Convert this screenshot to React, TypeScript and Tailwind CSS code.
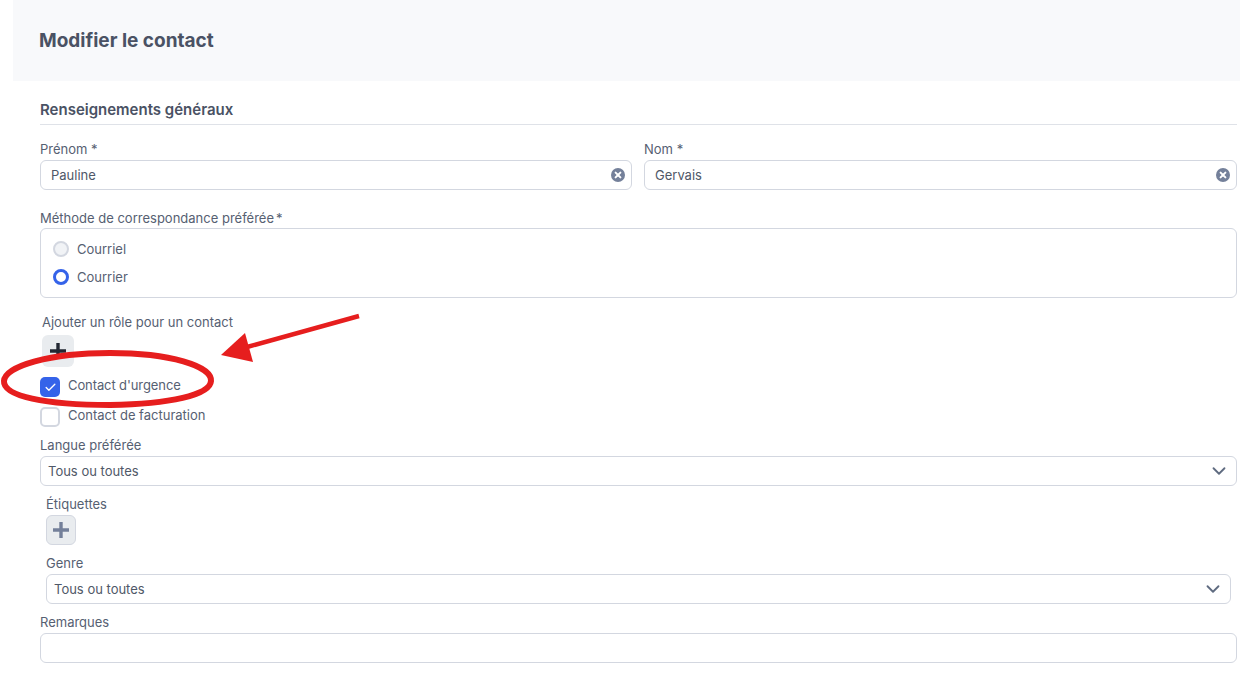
import { ChevronDown, Check } from "lucide-react";

const label = "text-[13px] leading-5 text-[#566072]";
const field = "h-[30px] rounded-md border border-[#d3d7e0] bg-white flex items-center justify-between text-[13px] text-[#4f5868]";

function Clear() {
  return (
    <svg width="14" height="14" viewBox="0 0 14 14" className="mr-[6px] -mt-px">
      <circle cx="7" cy="7" r="7" fill="#74809a" />
      <path d="M4.6 4.6l4.8 4.8M9.4 4.6l-4.8 4.8" stroke="#fff" strokeWidth="2" strokeLinecap="round" />
    </svg>
  );
}

function Plus({ color }: { color: string }) {
  return (
    <svg width="18" height="18" viewBox="0 0 18 18">
      <path d="M9 1v16M1 9h16" stroke={color} strokeWidth="3.4" />
    </svg>
  );
}

function SelectBox({ className }: { className: string }) {
  return (
    <div className={`${field} pl-[7px] pr-[6px] ${className}`}>
      <span className="pt-px">Tous ou toutes</span>
      <ChevronDown size={22} strokeWidth={2} color="#5f6b80" />
    </div>
  );
}

export default function App() {
  return (
    <div className="relative h-[682px] w-[1240px] overflow-hidden bg-white font-['Inter',sans-serif]">
      <div className="ml-[13px] flex h-[81px] items-center bg-[#f8f9fb] pl-[26px] pt-[2px]">
        <h1 className="text-[19px] font-bold text-[#4a5264]">Modifier le contact</h1>
      </div>

      <div className="pl-[40px] pr-[3px]">
        <h2 className="h-[44px] border-b border-[#dfe2e8] pt-[19px] text-[15px] leading-5 font-semibold text-[#4a5264]">
          Renseignements généraux
        </h2>

        <div className="mt-[14px] grid grid-cols-[592px_1fr] gap-x-[12px]">
          <div>
            <div className={`${label} mb-px`}>Prénom *</div>
            <div className={`${field} pl-[10px]`}>
              <span className="pt-px">Pauline</span>
              <Clear />
            </div>
          </div>
          <div>
            <div className={`${label} mb-px`}>Nom *</div>
            <div className={`${field} pl-[10px]`}>
              <span className="pt-px">Gervais</span>
              <Clear />
            </div>
          </div>
        </div>

        <div className={`${label} mt-[18px] flex gap-[2px]`}>
          <span>Méthode de correspondance préférée</span>
          <span>*</span>
        </div>
        <div className="flex h-[70px] flex-col justify-center gap-[12px] rounded-md border border-[#d3d7e0] pl-[12px]">
          <div className="flex items-center gap-[8px]">
            <span className="h-4 w-4 rounded-full border-2 border-[#d3d7e0] bg-[#f1f3f6]" />
            <span className="text-[13px] leading-4 text-[#566072]">Courriel</span>
          </div>
          <div className="flex items-center gap-[8px]">
            <span className="h-4 w-4 rounded-full border-[3px] border-[#3563e9] bg-white" />
            <span className="text-[13px] leading-4 text-[#566072]">Courrier</span>
          </div>
        </div>

        <div className={`${label} mt-[14px] ml-[2px]`}>Ajouter un rôle pour un contact</div>
        <div className="mt-[3px] ml-[2px] flex h-8 w-8 items-center justify-center rounded-md bg-[#e9ecef]">
          <Plus color="#232833" />
        </div>

        <div className="mt-[10px] flex h-5 items-start gap-[8px]">
          <span className="flex h-5 w-5 items-center justify-center rounded-[5px] bg-[#3563e9]">
            <Check size={13} strokeWidth={2.5} color="#fff" />
          </span>
          <span className={`${label} -mt-[2px] tracking-[-0.1px]`}>Contact d'urgence</span>
        </div>
        <div className="mt-[10px] flex h-5 items-start gap-[8px]">
          <span className="h-5 w-5 rounded-[5px] border-2 border-[#d3d7e0] bg-white" />
          <span className={`${label} -mt-[2px]`}>Contact de facturation</span>
        </div>

        <div className={`${label} mt-[8px] mb-px`}>Langue préférée</div>
        <SelectBox className="" />

        <div className={`${label} mt-[8px] ml-[6px]`}>Étiquettes</div>
        <div className="mt-px ml-[6px] flex h-[30px] w-[30px] items-center justify-center rounded-md border border-[#d3d7e0] bg-[#e9ecef]">
          <Plus color="#74809a" />
        </div>

        <div className={`${label} mt-[8px] ml-[6px] mb-px`}>Genre</div>
        <SelectBox className="mx-[6px]" />

        <div className={`${label} mt-[8px] mb-px`}>Remarques</div>
        <div className={field} />
      </div>

      <svg className="pointer-events-none absolute top-0 left-0" width="1240" height="682" viewBox="0 0 1240 682">
        <path
          d="M4 381C5 366 50 353 110 353C170 353 212 366 211 381C210 395 170 404 110 405C45 405 3 396 4 381Z"
          fill="none"
          stroke="#e61e1e"
          strokeWidth="6"
        />
        <path d="M359 316L247 347" stroke="#e61e1e" strokeWidth="4.5" fill="none" />
        <path d="M221 355L245 333L253 362Z" fill="#e61e1e" />
      </svg>
    </div>
  );
}
